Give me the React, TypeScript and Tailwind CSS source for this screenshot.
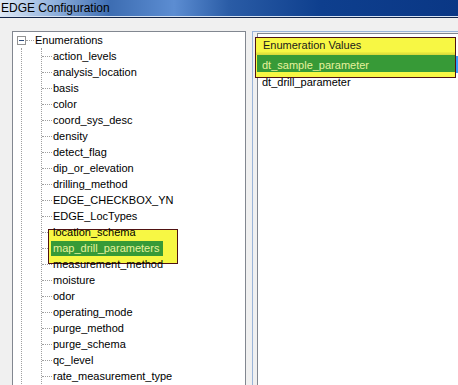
import React from 'react';

// Tree items under the "Enumerations" root node (only the visible ones).
const ENUMS = [
  'action_levels',
  'analysis_location',
  'basis',
  'color',
  'coord_sys_desc',
  'density',
  'detect_flag',
  'dip_or_elevation',
  'drilling_method',
  'EDGE_CHECKBOX_YN',
  'EDGE_LocTypes',
  'location_schema',
  'map_drill_parameters',
  'measurement_method',
  'moisture',
  'odor',
  'operating_mode',
  'purge_method',
  'purge_schema',
  'qc_level',
  'rate_measurement_type',
];

const SELECTED = 'map_drill_parameters';

const VALUES = ['dt_sample_parameter', 'dt_drill_parameter'];

const font = { fontFamily: '"Liberation Sans", Arial, sans-serif' };

function TreeRow({ label }: { label: string }) {
  const selected = label === SELECTED;
  return (
    <div className="flex h-[16px] items-center">
      <div className="w-[10px] border-t border-dotted border-[#a0a0a0]" />
      {selected ? (
        <span className="relative z-[2] ml-[-1px] flex h-[15px] items-center bg-[#379a37] pl-[2px] pr-[4px] text-[#e8f29c]">
          {label}
        </span>
      ) : (
        <span className="relative z-[2] ml-[1px] text-black">{label}</span>
      )}
    </div>
  );
}

export default function App() {
  return (
    <div className="relative h-[385px] w-[458px] overflow-hidden bg-[#f0f0f0] text-[11px] leading-[16px]" style={font}>
      {/* title bar */}
      <div className="flex h-[16px] items-center bg-[linear-gradient(90deg,#dfe9f6_0%,#8fb0dc_12%,#3d6db2_24%,#5c8dd2_38%,#2a5ca6_50%,#0e3f8e_70%,#0a3785_100%)] pl-[1px] text-[12px] text-black">
        EDGE Configuration
      </div>
      <div className="h-px bg-[#d6e2f2]" />
      <div className="h-px bg-[#14264a]" />

      <div className="flex pl-[12px] pt-[13px]">
        {/* tree panel */}
        <div className="h-[400px] w-[234px] overflow-hidden border border-[#828790] bg-white pl-[4px]">
          <div className="flex h-[16px] items-center">
            <div className="flex h-[9px] w-[9px] items-center justify-center border border-[#939393] bg-white">
              <div className="h-px w-[5px] bg-[#2c4a7a]" />
            </div>
            <div className="w-[8px] border-t border-dotted border-[#a0a0a0]" />
            <span className="ml-[1px] text-black">Enumerations</span>
          </div>
          <div className="ml-[4px] border-l border-dotted border-[#a0a0a0] pl-[19px]">
            <div className="border-l border-dotted border-[#a0a0a0] pb-[40px]">
              {ENUMS.map(e => (
                <TreeRow key={e} label={e} />
              ))}
            </div>
          </div>
        </div>

        {/* values panel */}
        <div className="ml-[6px] flex-1 border-l border-t border-[#9ab4d8] pl-[4px] pt-[1px]">
          <div className="h-[400px] border-l border-t border-[#828790] bg-white">
            <div className="flex h-[21px] items-center pl-[5px] pt-[1px]">
              <span className="relative z-[2] text-[#1a1a1a]">Enumeration Values</span>
            </div>
            {VALUES.map((v, i) => (
              <div
                key={v}
                className={`flex h-[17px] items-center pl-[4px] ${i === 0 ? 'mt-px bg-[#3399ff]' : ''}`}
              >
                <span className={`relative z-[2] ${i === 0 ? 'text-[#e8f29c]' : 'text-black'}`}>{v}</span>
              </div>
            ))}
          </div>
        </div>
      </div>

      {/* annotation: selected tree node */}
      <div className="absolute left-[48px] top-[229px] z-[1] h-[35px] w-[130px] border border-[#4f1212] bg-[#f7f744]" />

      {/* annotation: values header + selected value */}
      <div className="absolute left-[255px] top-[37px] z-[1] flex h-[41px] w-[201px] flex-col border border-[#4f1212] bg-[#f7f744]">
        <div className="h-[14px]" />
        <div className="h-[3px] bg-[linear-gradient(180deg,#f0f040,#d6d63a)]" />
        <div className="ml-px h-[17px] bg-[#379a37]" />
      </div>
    </div>
  );
}
